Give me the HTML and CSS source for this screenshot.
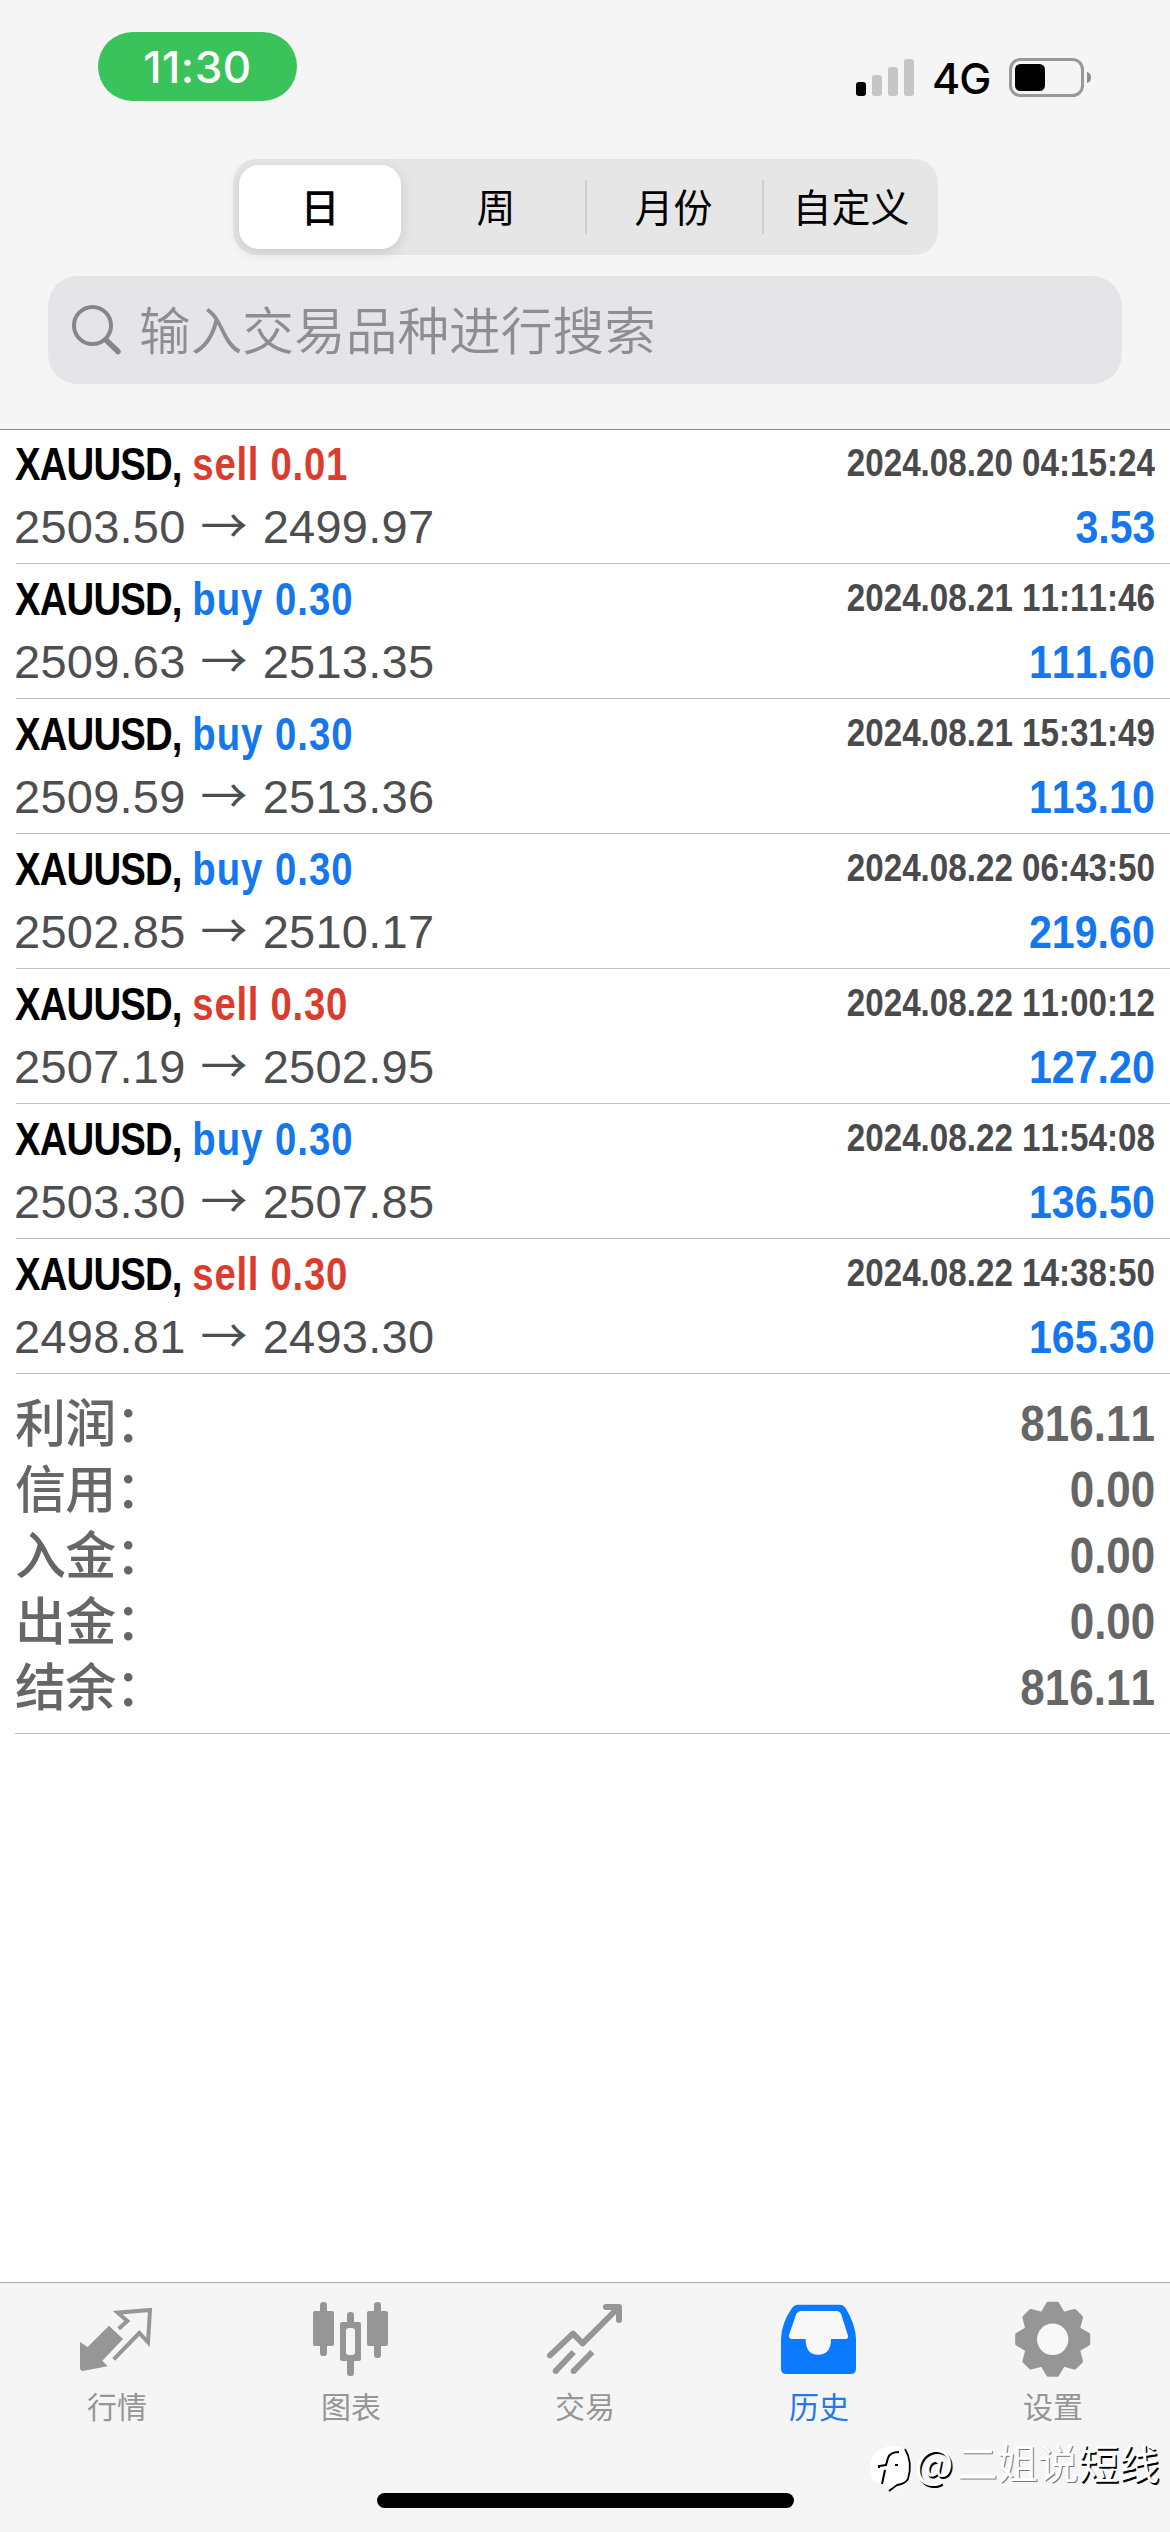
FILE: index.html
```html
<!DOCTYPE html>
<html lang="zh-CN">
<head>
<meta charset="utf-8">
<title>历史</title>
<link rel="stylesheet" href="styles.css">
</head>
<body>
<div class="app">
  <header class="header">
    <div class="status">
      <div class="clock">11:30</div>
      <div class="status-right">
        <svg class="signal" width="58" height="37" viewBox="0 0 58 37">
          <rect x="0" y="23" width="10" height="14" rx="3" fill="#000"/>
          <rect x="16" y="16" width="10" height="21" rx="3" fill="#c6c6c6"/>
          <rect x="32" y="8" width="10" height="29" rx="3" fill="#c6c6c6"/>
          <rect x="48" y="0" width="10" height="37" rx="3" fill="#c6c6c6"/>
        </svg>
        <span class="network">4G</span>
        <svg class="battery" width="83" height="39" viewBox="0 0 83 39">
          <rect x="1.5" y="1.5" width="72" height="36" rx="10" fill="none" stroke="#999" stroke-width="3"/>
          <rect x="6" y="6" width="30" height="27" rx="5.500" fill="#000"/>
          <path d="M78 14 Q82 15 82 19.500 Q82 24 78 25 Z" fill="#8c8c8c"/>
        </svg>
      </div>
    </div>
    <nav class="segments">
      <div class="segment selected">日</div>
      <div class="segment week">周</div>
      <div class="segment divided">月份</div>
      <div class="segment divided custom">自定义</div>
    </nav>
    <div class="search">
      <svg width="50" height="50" viewBox="0 0 50 50" fill="none" stroke="#868688" stroke-linecap="round">
        <circle cx="20.500" cy="20.500" r="18.500" stroke-width="4"/>
        <path d="M34 35 L46 46.500" stroke-width="5.500"/>
      </svg>
      <span>输入交易品种进行搜索</span>
    </div>
  </header>

  <main class="history">
    <article class="deal">
      <div class="line"><div class="order"><b>XAUUSD,</b> <span class="sell">sell 0.01</span></div><time>2024.08.20 04:15:24</time></div>
      <div class="line"><div class="price">2503.50<i>→</i>2499.97</div><div class="profit">3.53</div></div>
    </article>
    <article class="deal">
      <div class="line"><div class="order"><b>XAUUSD,</b> <span class="buy">buy 0.30</span></div><time>2024.08.21 11:11:46</time></div>
      <div class="line"><div class="price">2509.63<i>→</i>2513.35</div><div class="profit">111.60</div></div>
    </article>
    <article class="deal">
      <div class="line"><div class="order"><b>XAUUSD,</b> <span class="buy">buy 0.30</span></div><time>2024.08.21 15:31:49</time></div>
      <div class="line"><div class="price">2509.59<i>→</i>2513.36</div><div class="profit">113.10</div></div>
    </article>
    <article class="deal">
      <div class="line"><div class="order"><b>XAUUSD,</b> <span class="buy">buy 0.30</span></div><time>2024.08.22 06:43:50</time></div>
      <div class="line"><div class="price">2502.85<i>→</i>2510.17</div><div class="profit">219.60</div></div>
    </article>
    <article class="deal">
      <div class="line"><div class="order"><b>XAUUSD,</b> <span class="sell">sell 0.30</span></div><time>2024.08.22 11:00:12</time></div>
      <div class="line"><div class="price">2507.19<i>→</i>2502.95</div><div class="profit">127.20</div></div>
    </article>
    <article class="deal">
      <div class="line"><div class="order"><b>XAUUSD,</b> <span class="buy">buy 0.30</span></div><time>2024.08.22 11:54:08</time></div>
      <div class="line"><div class="price">2503.30<i>→</i>2507.85</div><div class="profit">136.50</div></div>
    </article>
    <article class="deal">
      <div class="line"><div class="order"><b>XAUUSD,</b> <span class="sell">sell 0.30</span></div><time>2024.08.22 14:38:50</time></div>
      <div class="line"><div class="price">2498.81<i>→</i>2493.30</div><div class="profit">165.30</div></div>
    </article>
    <dl class="summary">
      <div class="total"><dt>利润：</dt><dd>816.11</dd></div>
      <div class="total"><dt>信用：</dt><dd>0.00</dd></div>
      <div class="total"><dt>入金：</dt><dd>0.00</dd></div>
      <div class="total"><dt>出金：</dt><dd>0.00</dd></div>
      <div class="total"><dt>结余：</dt><dd>816.11</dd></div>
    </dl>
  </main>

  <footer class="footer">
    <nav class="tabs">
      <div class="tab">
        <svg viewBox="81 24 240 240">
          <path d="M90 156 L113 171 L177 107 L219 147 L157 212 L173 229 L97 243 Q90 242 90 235 Z" fill="#969696"/>
          <path d="M206 116 L232 93 L203 68 L300 60 L294 157 L268 129 L191 208" fill="none" stroke="#969696" stroke-width="12"/>
        </svg>
        <span>行情</span>
      </div>
      <div class="tab">
        <svg viewBox="783 24 240 240" fill="#969696">
          <rect x="810" y="36" width="21" height="162" rx="10"/>
          <rect x="789" y="63" width="63" height="105" rx="6"/>
          <rect x="972" y="36" width="21" height="168" rx="10"/>
          <rect x="951" y="63" width="63" height="105" rx="6"/>
          <rect x="891" y="66" width="21" height="192" rx="10"/>
          <rect x="870" y="96" width="63" height="117" rx="6"/>
          <rect x="888" y="114" width="27" height="81" rx="9" fill="#f5f5f5"/>
        </svg>
        <span>图表</span>
      </div>
      <div class="tab">
        <svg viewBox="45 24 240 240" fill="none" stroke="#969696" stroke-width="18" stroke-linejoin="round">
          <path d="M60 196 L129 131 L158 160 L264 54 M228 51 H267 V90" stroke-linecap="round"/>
          <path d="M131 186 L77 243 M187 186 L131 243"/>
          <path d="M77 243 h.1 M131 243 h.1" stroke-linecap="round"/>
        </svg>
        <span>交易</span>
      </div>
      <div class="tab active">
        <svg viewBox="747 24 240 240">
          <path d="M804 44 H930 Q940 44 947 54 Q977 104 978 147 V236 Q978 252 962 252 H769 Q753 252 753 236 V147 Q754 100 786 54 Q793 44 804 44 Z" fill="#0b7afe"/>
          <path d="M813 63 H921 Q928 63 933 71 L954 137 Q955 147 946 147 H903 Q903 194 864 194 Q827 194 827 147 H786 Q776 147 777 136 L799 71 Q804 63 813 63 Z" fill="#f8f8f8"/>
        </svg>
        <span>历史</span>
      </div>
      <div class="tab">
        <svg viewBox="0 0 80 80">
          <g transform="translate(39.700 41.300)" fill="#969696" stroke="#969696" stroke-width="4" stroke-linejoin="round">
            <circle r="27.500"/>
            <path id="teeth" d="M-9.500 -27 L-4.500 -35.500 H4.500 L9.500 -27 Z M-9.500 27 L-4.500 35.500 H4.500 L9.500 27 Z M-27 -9.500 L-35.500 -4.500 V4.500 L-27 9.500 Z M27 -9.500 L35.500 -4.500 V4.500 L27 9.500 Z"/>
            <use href="#teeth" transform="rotate(45)"/>
            <circle r="15.700" fill="#f8f8f8" stroke="none"/>
          </g>
        </svg>
        <span>设置</span>
      </div>
    </nav>
    <div class="home-indicator"></div>
    <div class="watermark">
      <svg width="46" height="52" viewBox="0 0 46 52" fill="none">
        <path d="M5 10 Q20 -3 36 5 Q44 17 40 33 Q36 41 24 47 L20 41 Q8 41 3 34 Q-1 20 5 10 Z" fill="#fff"/>
        <path d="M36 5 Q44 18 39 35 Q36 40 28 41 L20 47" stroke="#000" stroke-width="1.800"/>
        <path d="M30 8 Q21 8 19 14 L17 21 L10 22 V24 M16 26 L13 40 M26 21 H29" stroke="#000" stroke-width="2"/>
      </svg>
      <span class="at">@</span><span class="faint">二姐说</span><span class="strong">短线</span>
    </div>
  </footer>
</div>
</body>
</html>
```
FILE: styles.css
```css
* { box-sizing: border-box; }

body {
  margin: 0;
  background: #fff;
  font-family: "Liberation Sans", "Noto Sans CJK SC", sans-serif;
  font-kerning: none;
}

.app {
  display: flex;
  flex-direction: column;
  width: 1170px;
  height: 2532px;
  overflow: hidden;
}

/* Header */
.header {
  height: 430px;
  flex: none;
  background: #f5f5f5;
  border-bottom: 1px solid #8e8e8e;
  display: flex;
  flex-direction: column;
}

.status {
  height: 159px;
  display: flex;
  justify-content: space-between;
  align-items: flex-start;
  padding: 32px 78px 0 98px;
}

.clock {
  width: 199px;
  height: 69px;
  border-radius: 35px;
  background: #3ac35a;
  color: #fff;
  font: 500 44px/70px Inter, sans-serif;
  font-kerning: normal;
  letter-spacing: 0.5px;
  text-align: center;
}

.status-right {
  display: flex;
  align-items: center;
  height: 39px;
  margin-top: 26px;
}

.network {
  font: 500 43px/39px Inter, sans-serif;
  letter-spacing: -1px;
  width: 60px;
  margin: 1px 17px 0 18px;
}

.segments {
  width: 705px;
  height: 96px;
  margin-left: 233px;
  padding: 6px;
  border-radius: 24px;
  background: #e6e6e6;
  display: grid;
  grid-template-columns: 162px 184px 177px 1fr;
}

.segment {
  display: flex;
  align-items: center;
  justify-content: center;
  font: 400 39px/60px "Noto Sans CJK SC", sans-serif;
  color: #000;
  padding-bottom: 4px;
}

.selected {
  background: #fff;
  border-radius: 20px;
  font-weight: 500;
  box-shadow: 0 4px 14px rgba(0, 0, 0, 0.13);
}

.divided {
  background: linear-gradient(#cfcfcf, #cfcfcf) no-repeat 0 50% / 2px 54px;
}

.week { padding-left: 6px; }
.custom { padding-left: 8px; }

.search {
  height: 108px;
  margin: 21px 48px 0;
  padding: 0 24px;
  border-radius: 30px;
  background: #e5e5e8;
  display: flex;
  align-items: center;
  gap: 17px;
}

.search span {
  font: 400 51.700px/76px "Noto Sans CJK SC", sans-serif;
  font-weight: 350;
  color: #8e8e90;
  margin-top: -5px;
}

/* Deals */
.history { flex: 1; }

.deal {
  height: 135px;
  margin-left: 16px;
  padding: 3px 15px 0 0;
  border-bottom: 1px solid #bfbfc1;
}

.deal:first-child {
  height: 134px;
  padding-top: 2px;
}

.line {
  display: flex;
  justify-content: space-between;
  height: 63px;
  line-height: 63px;
  font-size: 47px;
  white-space: nowrap;
}

.order {
  margin-left: -1px;
  font-weight: 700;
  color: #000;
  transform: scaleX(0.815);
  transform-origin: left;
}

.order b { letter-spacing: -1px; }
.order .sell { color: #dc3c2e; letter-spacing: 0.9px; }
.order .buy { color: #1477ee; letter-spacing: 1.2px; }

time {
  font-size: 38px;
  font-weight: 700;
  color: #4a4a4d;
  transform: scaleX(0.873);
  transform-origin: right;
}

.price {
  margin-left: -2px;
  color: #4e4e50;
  letter-spacing: 0.25px;
}

.price i {
  display: inline-block;
  width: 77px;
  text-align: center;
  font: 400 47px/50px "Noto Sans CJK SC", sans-serif;
}

.profit {
  font-weight: 700;
  color: #1477ee;
  transform: scaleX(0.875);
  transform-origin: right;
}

/* Totals */
.summary {
  margin: 0 0 0 15px;
  padding: 17px 15px 12px 0;
  border-bottom: 1px solid #bfbfc1;
}

.total {
  display: flex;
  justify-content: space-between;
  height: 66px;
  color: #666;
}

.total dt {
  font: 500 51px/58px "Noto Sans CJK SC", sans-serif;
  letter-spacing: -0.8px;
}

.total dd {
  margin: 0;
  font-size: 50px;
  font-weight: 700;
  line-height: 66px;
  transform: scaleX(0.88);
  transform-origin: right;
}

/* Tab bar */
.footer {
  position: relative;
  height: 250px;
  flex: none;
  background: #f5f5f5;
  border-top: 1px solid #a8a8a8;
}

.tabs {
  display: grid;
  grid-template-columns: repeat(5, 1fr);
  padding-top: 15px;
}

.tab {
  display: flex;
  flex-direction: column;
  align-items: center;
  color: #969696;
  font: 400 30px/44px "Noto Sans CJK SC", sans-serif;
}

.tab svg { width: 80px; height: 80px; margin-bottom: 5px; }
.active { color: #2478ee; }

.home-indicator {
  width: 417px;
  height: 15px;
  margin: 66px 0 0 377px;
  border-radius: 8px;
  background: #000;
}

.watermark {
  position: absolute;
  left: 869px;
  top: 149px;
  display: flex;
  align-items: center;
  height: 60px;
  color: #fff;
  font: 400 40.500px/56px "Noto Sans CJK SC", sans-serif;
  white-space: nowrap;
}

.watermark svg { margin-top: 16px; }
.at { width: 42px; text-shadow: 1.5px 1.5px 0 #000; }
.faint { text-shadow: 1px 1px 0 #777; }
.strong { text-shadow: 1.5px 1.5px 0 #000; }
```
